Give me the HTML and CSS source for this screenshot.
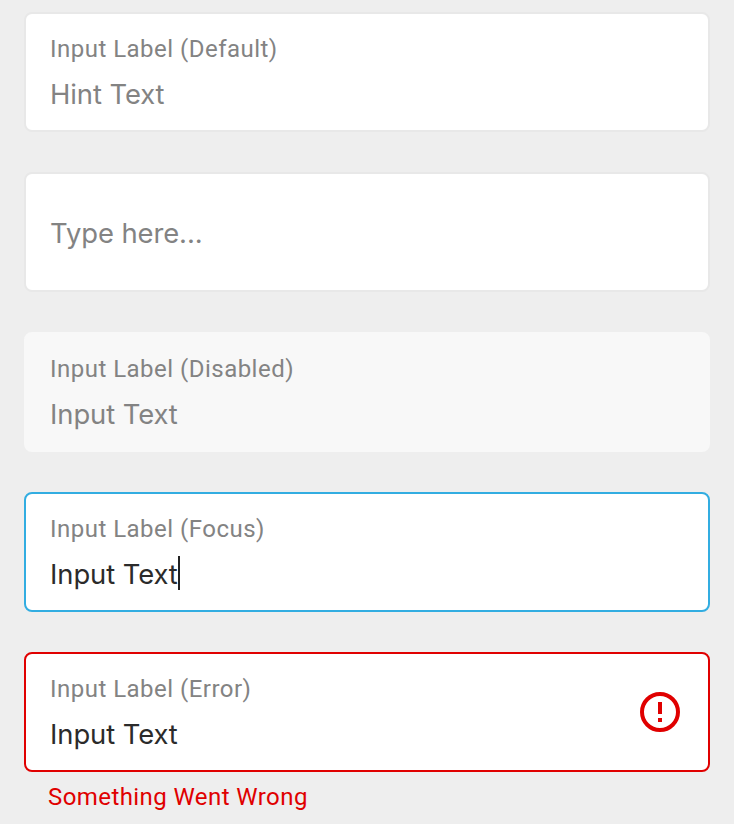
FILE: index.html
```html
<!DOCTYPE html>
<html lang="en">
<head>
<meta charset="utf-8">
<title>Input states</title>
<link rel="stylesheet" href="styles.css">
</head>
<body>
<main class="fields">
  <div class="field"><div class="label">Input Label (Default)</div><div class="value muted">Hint Text</div></div>
  <div class="field single"><div class="value muted">Type here...</div></div>
  <div class="field disabled"><div class="label">Input Label (Disabled)</div><div class="value muted">Input Text</div></div>
  <div class="field focus"><div class="label">Input Label (Focus)</div><div class="value">Input Text<i class="caret"></i></div></div>
  <div class="group">
    <div class="field error">
      <div class="copy"><div class="label">Input Label (Error)</div><div class="value">Input Text</div></div>
      <svg class="icon" viewBox="0 0 40 40" aria-hidden="true"><circle cx="20" cy="20" r="18" fill="none" stroke="currentColor" stroke-width="4"/><path d="M18 10h4v12h-4zM18 26h4v4h-4z" fill="currentColor"/></svg>
    </div>
    <div class="message">Something Went Wrong</div>
  </div>
</main>
</body>
</html>
```
FILE: styles.css
```css
* { box-sizing: border-box; }
body { margin: 0; background: #eee; font-family: Roboto, "Liberation Sans", sans-serif; }
.fields { height: 824px; padding: 12px 24px 0; display: flex; flex-direction: column; gap: 40px; overflow: hidden; }
.field { height: 120px; flex: none; background: #fff; border: 2px solid #e8e8e8; border-radius: 8px; padding: 20px 24px 0; }
.single { padding-top: 41px; }
.disabled { background: #f8f8f8; border-color: #f8f8f8; }
.focus { border-color: #32ade1; }
.error { border-color: #e00000; display: flex; justify-content: space-between; }
.label { height: 30px; line-height: 30px; font-size: 24px; letter-spacing: 0.48px; color: #838383; white-space: nowrap; }
.value { height: 34px; margin-top: 12px; line-height: 36px; font-size: 27.4px; letter-spacing: -0.08px; font-family: Inter, sans-serif; color: #2b2b2b; display: flex; white-space: nowrap; }
.single .value { margin-top: 0; }
.value.muted { color: #838383; }
.caret { width: 2px; height: 34px; background: #222; }
.icon { width: 40px; height: 40px; margin: 18px 4px 0 0; color: #e00000; }
.message { height: 30px; margin: 10px 0 0 24px; line-height: 30px; font-size: 24px; letter-spacing: 0.42px; color: #e00000; }
```
